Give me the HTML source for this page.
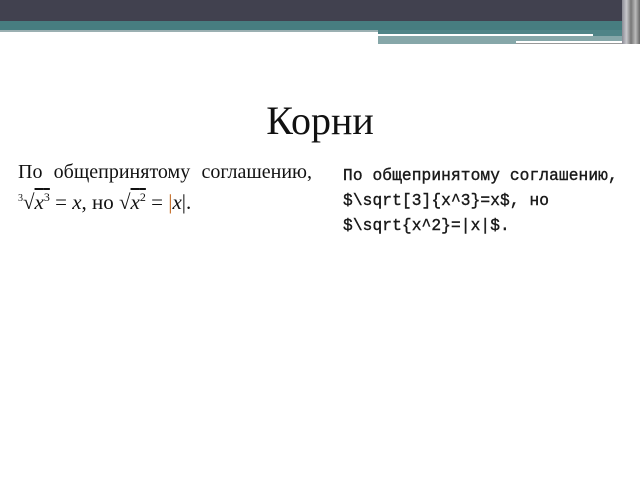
<!DOCTYPE html>
<html><head><meta charset="utf-8"><style>
body{margin:0;width:640px;height:480px;background:#fff;position:relative;overflow:hidden}
div{position:absolute}
.s{font-family:"Liberation Serif","DejaVu Serif",serif;color:#111;white-space:nowrap}
.m{font-family:"Liberation Mono",monospace;color:#1a1a1a;white-space:nowrap;font-size:16.2px;letter-spacing:0.1px;-webkit-text-stroke:0.4px #1a1a1a}
i{font-style:italic}
</style></head><body>
<div style="left:0;top:0;width:640px;height:21px;background:#41414f"></div>
<div style="left:0;top:21px;width:640px;height:9px;background:#477d80"></div>
<div style="left:0;top:30px;width:378px;height:2px;background:#9bb0b2"></div>
<div style="left:378px;top:30px;width:248px;height:6px;background:#4f8487"></div>
<div style="left:378px;top:34px;width:215px;height:2px;background:#fff"></div>
<div style="left:378px;top:36px;width:248px;height:8px;background:#86a7a9"></div>
<div style="left:516px;top:41px;width:112px;height:2px;background:#fff"></div>
<div style="left:516px;top:43px;width:112px;height:1px;background:#999"></div>
<div style="left:622px;top:0;width:18px;height:44px;background:linear-gradient(90deg,#8a8a94,#c8c8cc,#777,#bbb,#666)"></div>
<div class="s" style="left:0;width:640px;text-align:center;top:97px;font-size:40px;line-height:48px">Корни</div>
<div class="s" style="left:18px;top:161px;font-size:20px;line-height:22px;width:294px;text-align:justify;text-align-last:justify">По общепринятому соглашению,</div>
<div class="s" style="left:18px;top:184px;font-size:21px;line-height:26px"><sup style="font-size:10px">3</sup>√<span style="text-decoration:overline"><i>x</i><sup style="font-size:12px">3</sup></span> = <i>x</i>, но √<span style="text-decoration:overline"><i>x</i><sup style="font-size:12px">2</sup></span> = <span style="color:#c0651c">|</span><i>x</i>|.</div>
<div class="m" style="left:343px;top:164px;line-height:25px">По общепринятому соглашению,<br>$\sqrt[3]{x^3}=x$, но<br>$\sqrt{x^2}=|x|$.</div>
</body></html>
